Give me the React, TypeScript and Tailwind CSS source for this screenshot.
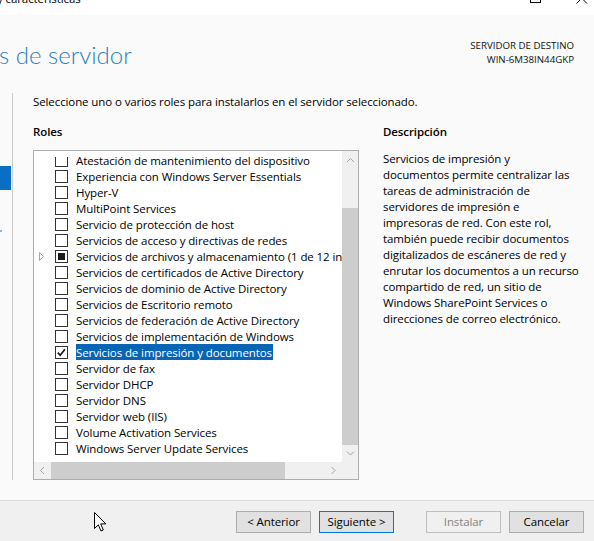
import React from "react";

const FONT = { fontFamily: '"Open Sans", "Noto Sans", "Liberation Sans", sans-serif' };
const HEAD_FONT = { fontFamily: 'Lato, "Open Sans", "Noto Sans", sans-serif' };

type Row = { label: string; state?: "checked" | "partial"; expander?: boolean; selected?: boolean };

const rows: Row[] = [
  { label: "Atestación de mantenimiento del dispositivo" },
  { label: "Experiencia con Windows Server Essentials" },
  { label: "Hyper-V" },
  { label: "MultiPoint Services" },
  { label: "Servicio de protección de host" },
  { label: "Servicios de acceso y directivas de redes" },
  { label: "Servicios de archivos y almacenamiento (1 de 12 instalados)", state: "partial", expander: true },
  { label: "Servicios de certificados de Active Directory" },
  { label: "Servicios de dominio de Active Directory" },
  { label: "Servicios de Escritorio remoto" },
  { label: "Servicios de federación de Active Directory" },
  { label: "Servicios de implementación de Windows" },
  { label: "Servicios de impresión y documentos", state: "checked", selected: true },
  { label: "Servidor de fax" },
  { label: "Servidor DHCP" },
  { label: "Servidor DNS" },
  { label: "Servidor web (IIS)" },
  { label: "Volume Activation Services" },
  { label: "Windows Server Update Services" },
];

const descLines = [
  "Servicios de impresión y",
  "documentos permite centralizar las",
  "tareas de administración de",
  "servidores de impresión e",
  "impresoras de red. Con este rol,",
  "también puede recibir documentos",
  "digitalizados de escáneres de red y",
  "enrutar los documentos a un recurso",
  "compartido de red, un sitio de",
  "Windows SharePoint Services o",
  "direcciones de correo electrónico.",
];

function Checkbox({ state, clipped }: { state?: "checked" | "partial"; clipped?: boolean }) {
  return (
    <span
      className={`w-[13px] border border-[#333333] bg-white flex items-center justify-center shrink-0 ${
        clipped ? "h-[10px] border-t-0 mt-[3px]" : "h-[13px]"
      }`}
    >
      {state === "partial" && <span className="w-[7px] h-[7px] bg-[#1a1a1a]" />}
      {state === "checked" && (
        <svg width="11" height="11" viewBox="0 0 11 11">
          <path d="M1.8 5.6 L4.2 8.2 L9 2.2" stroke="#111" strokeWidth="1.6" fill="none" />
        </svg>
      )}
    </span>
  );
}

function Chevron({ dir }: { dir: "up" | "down" | "left" | "right" }) {
  const d =
    dir === "up"
      ? "M1 5 L4.5 1.5 L8 5"
      : dir === "down"
      ? "M1 1.5 L4.5 5 L8 1.5"
      : dir === "left"
      ? "M5 1 L1.5 4.5 L5 8"
      : "M1.5 1 L5 4.5 L1.5 8";
  const w = dir === "up" || dir === "down" ? 9 : 7;
  const h = dir === "up" || dir === "down" ? 7 : 9;
  return (
    <svg width={w} height={h} viewBox={`0 0 ${w} ${h}`}>
      <path d={d} stroke="#a3a3a3" strokeWidth="1" fill="none" />
    </svg>
  );
}

function Button({ children, variant }: { children: React.ReactNode; variant?: "primary" | "disabled" }) {
  const cls =
    variant === "primary"
      ? "border-[#0078d7] bg-[#e1e1e1] text-black"
      : variant === "disabled"
      ? "border-[#bfbfbf] bg-[#f0f0f0] text-[#838383]"
      : "border-[#adadad] bg-[#e1e1e1] text-black";
  return (
    <div className={`w-[75px] h-[22px] border flex items-center justify-center text-[11.5px] tracking-[-0.1px] ${cls}`}>
      {children}
    </div>
  );
}

export default function App() {
  return (
    <div className="w-[594px] h-[541px] relative overflow-hidden bg-[#fafafa] flex flex-col text-black" style={FONT}>
      {/* title bar */}
      <div className="h-[15px] bg-white relative overflow-hidden shrink-0">
        <span className="absolute left-[-3px] top-[-9px] text-[11.5px] leading-[16px] whitespace-nowrap tracking-[-0.1px]">
          y características
        </span>
        <svg className="absolute left-0 top-0" width="594" height="15" viewBox="0 0 594 15">
          <rect x="530.5" y="-7.5" width="10" height="10" stroke="#000" strokeWidth="1" fill="none" />
          <path d="M576.5 -7 L587 3.5 M587 -7 L576.5 3.5" stroke="#000" strokeWidth="1" fill="none" />
        </svg>
      </div>

      {/* header */}
      <div className="h-[78px] shrink-0 flex justify-between pt-[24px] pr-[20px]">
        <div
          className="text-[24px] leading-[32px] font-light text-[#2a7fba] ml-[-1px] whitespace-nowrap"
          style={HEAD_FONT}
        >
          s de servidor
        </div>
        <div className="text-[9.7px] leading-[14px] text-right text-[#111] whitespace-nowrap">
          <div>SERVIDOR DE DESTINO</div>
          <div>WIN-6M38IN44GKP</div>
        </div>
      </div>

      {/* body */}
      <div className="flex-1 min-h-0 flex">
        <div className="w-[13px] h-[387px] border-r border-[#c9c9c9] flex flex-col shrink-0">
          <div className="mt-[73px] w-[11px] h-[24px] bg-[#0a6fc2]" />
          <div className="mt-[40px] w-[2px] h-[2px] bg-[#8ab8e0]" />
        </div>
        <div className="pl-[20px] flex flex-col text-[11.5px] tracking-[-0.1px]">
          <div className="mt-[1px] leading-[16px] whitespace-nowrap">
            Seleccione uno o varios roles para instalarlos en el servidor seleccionado.
          </div>
          <div className="mt-[14px] flex">
            {/* roles column */}
            <div className="w-[326px] flex flex-col">
              <div className="leading-[16px] font-semibold">Roles</div>
              <div className="mt-[10px] w-[326px] h-[330px] border border-[#adadad] bg-white flex flex-col">
                <div className="flex flex-1 min-h-0">
                  <div className="flex-1 min-w-0 flex flex-col">
                    <div className="h-[2px] shrink-0" />
                    <div className="flex-1 overflow-hidden">
                      <div className="mt-[-1px] flex flex-col">
                        {rows.map((r, i) => (
                          <div key={i} className="h-[16px] flex items-center pl-[5px] whitespace-nowrap">
                            <span className="w-[16px] shrink-0 flex items-center">
                              {r.expander && (
                                <svg width="6" height="9" viewBox="0 0 6 9">
                                  <path d="M0.5 0.5 L4.5 4.5 L0.5 8.5 Z" stroke="#a6a6a6" strokeWidth="1" fill="none" />
                                </svg>
                              )}
                            </span>
                            <Checkbox state={r.state} clipped={i === 0} />
                            <span
                              className={`ml-[8px] h-[16px] pt-[2px] leading-[14px] pr-[1px] ${
                                r.selected ? "bg-[#0a64b4] text-white" : ""
                              }`}
                            >
                              {r.label}
                            </span>
                          </div>
                        ))}
                      </div>
                    </div>
                  </div>
                  {/* vertical scrollbar */}
                  <div className="w-[16px] bg-[#f0f0f0] flex flex-col shrink-0">
                    <div className="h-[18px] flex items-center justify-center">
                      <Chevron dir="up" />
                    </div>
                    <div className="h-[39px]" />
                    <div className="h-[237px] bg-[#cdcdcd]" />
                    <div className="flex-1 flex items-center justify-center">
                      <Chevron dir="down" />
                    </div>
                  </div>
                </div>
                {/* horizontal scrollbar */}
                <div className="h-[17px] flex bg-[#f0f0f0] shrink-0">
                  <div className="w-[17px] flex items-center justify-center">
                    <Chevron dir="left" />
                  </div>
                  <div className="w-[234px] bg-[#cdcdcd]" />
                  <div className="flex-1 flex items-center justify-end pr-[5px]">
                    <Chevron dir="right" />
                  </div>
                  <div className="w-[16px]" />
                </div>
              </div>
            </div>
            {/* description column */}
            <div className="ml-[24px] w-[200px] flex flex-col">
              <div className="leading-[16px] font-semibold">Descripción</div>
              <div className="mt-[11px] flex flex-col leading-[16px] whitespace-nowrap">
                {descLines.map((l, i) => (
                  <div key={i}>{l}</div>
                ))}
              </div>
            </div>
          </div>
        </div>
      </div>

      {/* footer */}
      <div className="h-[41px] shrink-0 border-t border-[#dadada] bg-[#f0f0f0] flex justify-end items-start pt-[10px] pr-[10px]">
        <Button>&lt; Anterior</Button>
        <div className="ml-[8px]">
          <Button variant="primary">Siguiente &gt;</Button>
        </div>
        <div className="ml-[32px]">
          <Button variant="disabled">Instalar</Button>
        </div>
        <div className="ml-[8px]">
          <Button>Cancelar</Button>
        </div>
      </div>

      {/* mouse cursor */}
      <svg className="absolute left-[94px] top-[512px]" width="13" height="21" viewBox="0 0 13 21">
        <path
          d="M0.5 0.5 L0.5 16.5 L4.3 12.8 L7 19 L9.3 18 L6.7 11.9 L11.8 11.9 Z"
          fill="#fff"
          stroke="#000"
          strokeWidth="1"
          strokeLinejoin="miter"
        />
      </svg>
    </div>
  );
}
